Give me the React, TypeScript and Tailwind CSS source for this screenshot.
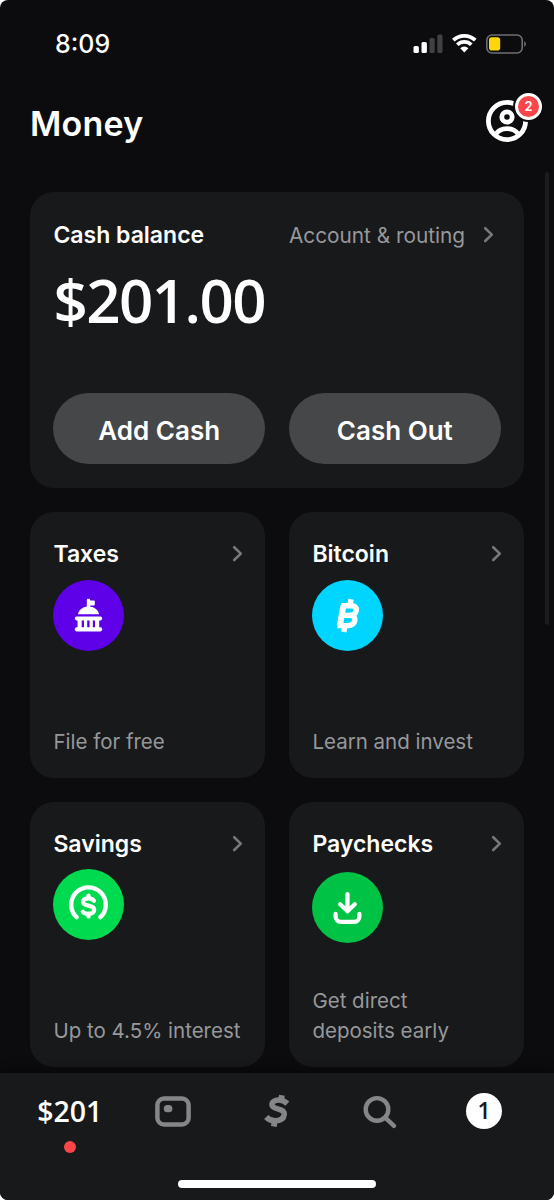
import React from 'react';

const ChevronIcon = () => (
  <svg width="12" height="18" viewBox="0 0 12 18" fill="none" className="shrink-0">
    <path d="M2.2 2.2L8.8 8.6L2.2 15" stroke="#77787a" strokeWidth="2.6" strokeLinecap="round" strokeLinejoin="round" />
  </svg>
);

const CapitolIcon = () => (
  <svg width="71" height="71" viewBox="0 0 71 71" fill="#fff">
    <rect x="33.8" y="18.8" width="3.4" height="10" rx="1.2" />
    <rect x="35" y="20.6" width="6.8" height="4.8" rx="0.8" />
    <path d="M25 34.3C25.8 29.8 30 26.6 35.5 26.6S45.2 29.8 46 34.3Z" />
    <rect x="21.8" y="36.4" width="27.4" height="4" rx="1.8" />
    <path d="M24.5 40H28.7V48H24.5ZM31 40H34.2V48H31ZM36.6 40H39.8V48H36.6ZM42 40H46.2V48H42Z" />
    <rect x="21.8" y="47.2" width="27.4" height="4.2" rx="1.8" />
  </svg>
);

const BitcoinIcon = () => (
  <svg width="71" height="71" viewBox="0 0 71 71" fill="none" stroke="#fff" strokeWidth="5.4" strokeLinejoin="round">
    <path d="M29.5 25.7H39.4C42.8 25.7 44.8 27.6 44.3 30.4C43.8 33.4 41.4 35.4 38 35.4H31" />
    <path d="M38 35.4C41.4 35.4 43.4 37.4 42.8 40.6C42.2 43.8 39.8 45.6 36.2 45.6H25.4" />
    <path d="M31.4 25.7L27.8 45.6" strokeWidth="6" />
    <path d="M39 19.3L38 25.5M32.8 46L31.8 52" strokeLinejoin="miter" />
  </svg>
);

const SavingsIcon = () => (
  <svg width="71" height="71" viewBox="0 0 71 71" fill="none" stroke="#fff" strokeLinecap="round" strokeLinejoin="round">
    <path d="M23.6 48.2A17.3 17.3 0 1 1 47.4 48.2" strokeWidth="4.4" />
    <path d="M41 31.8C39.8 30.2 37.8 29.4 35.5 29.4C32.2 29.4 30 30.8 30 33.1C30 38.2 41.2 35 41.2 40.8C41.2 43.4 38.8 44.8 35.5 44.8C33 44.8 31 44.1 29.8 42.8" strokeWidth="4.2" />
    <path d="M35.5 26.8V29M35.5 45V47.4" strokeWidth="4.4" />
  </svg>
);

const DepositIcon = () => (
  <svg width="71" height="71" viewBox="0 0 71 71" fill="none" stroke="#fff" strokeWidth="4.2" strokeLinecap="round" strokeLinejoin="round">
    <path d="M35.5 22V38.5M28.2 32.2L35.5 39.3L42.8 32.2" />
    <path d="M23.6 41.8V44.2C23.6 47.6 25.6 49.8 29 49.8H42C45.4 49.8 47.4 47.6 47.4 44.2V41.8" />
  </svg>
);

interface TileProps {
  title: string;
  caption: string;
  color: string;
  icon: React.ReactNode;
  iconGap?: string;
}

const Tile: React.FC<TileProps> = ({ title, caption, color, icon, iconGap = 'mt-[10.5px]' }) => (
  <section className="flex flex-col h-[265.5px] rounded-[24px] bg-[#18191b] pl-[23.4px] pr-[21.5px] pt-[27px] pb-[21px]">
    <div className="flex items-center justify-between h-[30px]">
      <h2 className="text-[23px] leading-[30px] font-semibold text-white">{title}</h2>
      <ChevronIcon />
    </div>
    <div className={`w-[71px] h-[71px] rounded-full ${color} ${iconGap}`}>{icon}</div>
    <p className="mt-auto text-[20.5px] leading-[30px] text-[#97989a] whitespace-pre">{caption}</p>
  </section>
);

const StatusBar = () => (
  <div className="flex items-center justify-between h-[88px] pl-[55px] pr-[27px]">
    <span className="text-[25px] leading-[30px] font-medium text-white">8:09</span>
    <svg width="114" height="22" viewBox="0 0 114 22" fill="none">
      <rect x="0.5" y="13" width="5.4" height="7" rx="1.6" fill="#fff" />
      <rect x="8.5" y="9" width="5.4" height="11" rx="1.6" fill="#fff" />
      <rect x="16.5" y="5" width="5.2" height="15" rx="1.6" fill="#414143" />
      <rect x="24.3" y="1.5" width="5.2" height="18.5" rx="1.6" fill="#414143" />
      <path d="M40.3 7.2A16 16 0 0 1 62.3 7.2M44.3 11.8A10 10 0 0 1 58.3 11.8" stroke="#fff" strokeWidth="3.7" />
      <path d="M47.2 15.2A6 6 0 0 1 55.4 15.2L51.3 19.6Z" fill="#fff" />
      <rect x="73.8" y="2" width="35.4" height="18" rx="5.2" stroke="#6f6f72" strokeWidth="1.6" />
      <rect x="76" y="4.2" width="11.2" height="13.4" rx="2.8" fill="#ffd60a" />
      <path d="M111.2 8.2C113.4 8.8 113.4 13 111.2 13.7Z" fill="#6f6f72" />
    </svg>
  </div>
);

const ProfileButton = () => (
  <button type="button" aria-label="Profile" className="relative w-[42px] h-[42px] mb-[6px]">
    <svg width="42" height="42" viewBox="0 0 42 42" fill="none" stroke="#fff">
      <circle cx="21" cy="21" r="18.6" strokeWidth="4.8" />
      <circle cx="21" cy="17" r="5.2" strokeWidth="4.8" />
      <path d="M9.5 34.5C12 30.6 16 28.6 21 28.6S30 30.6 32.5 34.5" strokeWidth="4.8" />
    </svg>
    <span className="absolute left-[27px] top-[-9px] flex items-center justify-center w-[31px] h-[31px] rounded-full bg-[#0c0c0e]">
      <span className="flex items-center justify-center shrink-0 w-[27px] h-[27px] rounded-full border-[3px] border-white bg-[#fc4549] pt-px text-[13px] font-semibold text-white">
        2
      </span>
    </span>
  </button>
);

const BottomNav = () => (
  <nav className="absolute inset-x-0 bottom-0 h-[127.5px] bg-[#18191b] shadow-[0_-3px_10px_rgba(0,0,0,0.45)]">
    <div className="grid grid-cols-5 mx-[18px] pt-[20px] justify-items-center">
      <div className="flex flex-col items-center">
        <span className="h-[38px] text-[28.5px] leading-[36px] font-semibold font-['Open_Sans',sans-serif] text-white">$201</span>
        <span className="mt-[10px] w-3 h-3 rounded-full bg-[#fc4549]" />
      </div>
      <svg width="36" height="38" viewBox="0 0 36 38" fill="none">
        <rect x="2.4" y="5.6" width="31.2" height="25.8" rx="6.5" stroke="#858688" strokeWidth="4.5" />
        <rect x="8.8" y="12.1" width="8.6" height="7.2" rx="3.5" fill="#858688" />
      </svg>
      <svg width="28" height="38" viewBox="0 0 28 38" fill="none" stroke="#858688" strokeWidth="5.6">
        <path d="M24.4 10.6C21.6 8 18.6 7 15.8 7C11.8 7 9 8.8 9 11.8C9 17 21.6 14.8 21.2 21.2C20.8 25.8 17 27.8 12 27.8C8.2 27.8 5.2 26.2 3.2 24" />
        <path d="M18.9 2.2L18 7M11.8 28L10.8 33.6" strokeWidth="5.8" />
      </svg>
      <svg width="36" height="38" viewBox="0 0 36 38" fill="none" stroke="#858688" strokeWidth="4.4">
        <circle cx="14" cy="16.4" r="11.3" />
        <path d="M22.2 24.6L31 32.8" strokeLinecap="round" />
      </svg>
      <span className="flex items-center justify-center w-9 h-9 rounded-full bg-white text-[23px] font-semibold font-['Open_Sans',sans-serif] text-[#18191b]">
        1
      </span>
    </div>
    <div className="absolute left-[178px] bottom-[12px] w-[198px] h-2 rounded-full bg-white" />
  </nav>
);

export default function App() {
  return (
    <div className="w-[554px] h-[1200px] bg-white font-['Inter',sans-serif]">
      <div className="relative h-full overflow-hidden rounded-[8px] bg-[#0c0c0e]">
        <StatusBar />
        <header className="flex items-center justify-between h-[66px] mt-[3px] pl-[30px] pr-[26px]">
          <h1 className="text-[34px] leading-[44px] font-semibold tracking-[0.2px] text-white">Money</h1>
          <ProfileButton />
        </header>

        <main className="mt-[35px] mx-[30px]">
          <section className="flex flex-col h-[296px] rounded-[24px] bg-[#18191b] px-[23.4px] pt-[28px] pb-6">
            <div className="flex items-center justify-between h-[30px]">
              <h2 className="text-[23px] leading-[30px] font-semibold text-white">Cash balance</h2>
              <div className="flex items-center gap-[18px] pr-[5.5px]">
                <span className="pt-[2px] text-[20.8px] leading-[30px] text-[#97989a]">Account &amp; routing</span>
                <ChevronIcon />
              </div>
            </div>
            <p className="mt-[13.5px] text-[60px] leading-[72px] font-semibold font-['Open_Sans',sans-serif] tracking-[-1.5px] text-white">
              $201.00
            </p>
            <div className="mt-auto grid grid-cols-2 gap-6">
              <button type="button" className="h-[71px] pt-[3px] rounded-full bg-[#464749] text-[26px] font-semibold text-white">
                Add Cash
              </button>
              <button type="button" className="h-[71px] pt-[3px] rounded-full bg-[#464749] text-[26px] font-semibold text-white">
                Cash Out
              </button>
            </div>
          </section>

          <div className="grid grid-cols-2 gap-6 mt-6">
            <Tile title="Taxes" caption="File for free" color="bg-[#5e00e8]" icon={<CapitolIcon />} />
            <Tile title="Bitcoin" caption="Learn and invest" color="bg-[#00d5ff]" icon={<BitcoinIcon />} />
            <Tile title="Savings" caption="Up to 4.5% interest" color="bg-[#00da4e]" icon={<SavingsIcon />} />
            <Tile
              title="Paychecks"
              caption={'Get direct\ndeposits early'}
              color="bg-[#00c244]"
              icon={<DepositIcon />}
              iconGap="mt-[13.5px]"
            />
          </div>
        </main>

        {/* scroll indicator */}
        <div className="absolute right-[5px] top-[172px] w-1 h-[453px] rounded-full bg-[#1b1c1e]" />
        <BottomNav />
      </div>
    </div>
  );
}
